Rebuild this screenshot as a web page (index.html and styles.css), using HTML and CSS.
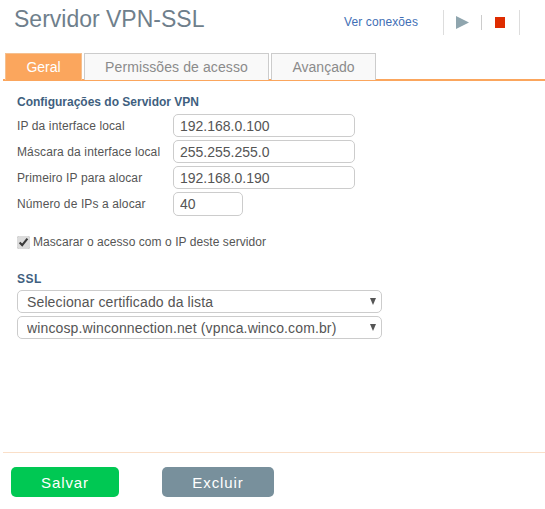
FILE: index.html
```html
<!DOCTYPE html>
<html lang="pt-BR">
<head>
    <meta charset="UTF-8">
    <meta name="viewport" content="width=device-width, initial-scale=1.0">
    <title>Servidor VPN-SSL</title>
    <link rel="stylesheet" href="styles.css">
</head>
<body>
    <div class="page-header">
        <h1>Servidor VPN-SSL</h1>
        <a class="view-link" href="#">Ver conexões</a>
        <div class="toolbar">
            <button class="tool-button play" type="button" aria-label="Iniciar">
                <svg width="13" height="13" viewBox="0 0 13 13"><path d="M0 0L13 6.5L0 13Z" fill="#8fa5ae"/></svg>
            </button>
            <span class="tool-divider"></span>
            <button class="tool-button stop" type="button" aria-label="Parar">
                <svg width="10" height="11" viewBox="0 0 10 11"><rect width="10" height="11" fill="#de2c00"/></svg>
            </button>
        </div>
    </div>

    <div class="tabs">
        <a class="tab active" href="#">Geral</a>
        <a class="tab permissions" href="#">Permissões de acesso</a>
        <a class="tab advanced" href="#">Avançado</a>
    </div>

    <div class="tab-content">
        <h2>Configurações do Servidor VPN</h2>
        <div class="form-row">
            <label>IP da interface local</label>
            <input class="text-input" type="text" value="192.168.0.100">
        </div>
        <div class="form-row">
            <label>Máscara da interface local</label>
            <input class="text-input" type="text" value="255.255.255.0">
        </div>
        <div class="form-row">
            <label>Primeiro IP para alocar</label>
            <input class="text-input" type="text" value="192.168.0.190">
        </div>
        <div class="form-row">
            <label>Número de IPs a alocar</label>
            <input class="text-input short" type="text" value="40">
        </div>

        <label class="check-row">
            <input type="checkbox" checked>
            Mascarar o acesso com o IP deste servidor
        </label>

        <h2 class="ssl-title">SSL</h2>
        <div class="select-wrap">
            <select class="select-input">
                <option>Selecionar certificado da lista</option>
            </select>
        </div>
        <div class="select-wrap">
            <select class="select-input">
                <option>wincosp.winconnection.net (vpnca.winco.com.br)</option>
            </select>
        </div>
    </div>

    <div class="page-footer">
        <button class="btn save" type="button">Salvar</button>
        <button class="btn delete" type="button">Excluir</button>
    </div>
</body>
</html>
```

FILE: styles.css
```css
html, body {
    height: 100%;
}

body {
    margin: 0;
    font-family: "Liberation Sans", Arial, sans-serif;
    font-size: 12px;
    color: #555;
    background-color: #fff;
    overflow: hidden;
}

.page-header {
    display: flex;
    align-items: flex-start;
    height: 53px;
    padding-left: 14px;
    box-sizing: border-box;
}

h1 {
    margin: 4px 0 0;
    font-size: 23px;
    line-height: 30px;
    font-weight: normal;
    color: #6f7f8c;
}

.view-link {
    margin: 15px 0 0 auto;
    font-size: 12px;
    line-height: 15px;
    letter-spacing: 0.1px;
    color: #3f6fb5;
    text-decoration: none;
}

.toolbar {
    display: flex;
    align-items: center;
    height: 25px;
    margin: 10px 25px 0 25px;
    border-left: 1px solid #ddd;
    border-right: 1px solid #ddd;
}

.tool-button {
    display: flex;
    align-items: center;
    justify-content: center;
    padding: 0;
    border: none;
    background: none;
}

.tool-button.play {
    width: 37px;
}

.tool-button.stop {
    width: 37px;
    padding-right: 2px;
    box-sizing: border-box;
}

.tool-divider {
    width: 1px;
    height: 15px;
    background-color: #ccc;
}

.tabs {
    display: flex;
    gap: 2px;
    height: 28px;
    margin-left: 3px;
    padding-left: 2px;
    box-sizing: border-box;
    border-bottom: 2px solid #fba65d;
}

.tab {
    box-sizing: border-box;
    height: 27px;
    line-height: 26px;
    text-align: center;
    font-size: 14px;
    color: #8b8b8b;
    text-decoration: none;
    background-color: #f9f9f9;
    border: 1px solid #ccc;
    border-bottom: none;
}

.tab.active {
    width: 77px;
    color: #fff;
    background-color: #fba65d;
    border-color: #f5c08f;
}

.tab.permissions {
    width: 185px;
    letter-spacing: 0.1px;
}

.tab.advanced {
    width: 105px;
}

.tab-content {
    padding: 14px 0 0 17px;
}

h2 {
    margin: 0 0 5px;
    font-size: 12px;
    line-height: 14px;
    font-weight: bold;
    color: #3f5f80;
}

.form-row {
    display: flex;
    align-items: center;
    height: 23px;
    margin-bottom: 3px;
}

.form-row label {
    width: 156px;
    flex-shrink: 0;
    letter-spacing: 0.12px;
    color: #555;
}

.text-input {
    box-sizing: border-box;
    width: 182px;
    height: 23px;
    padding: 1px 6px 0;
    font-family: inherit;
    font-size: 14px;
    color: #555;
    border: 1px solid #ccc;
    border-radius: 5px;
    outline: none;
}

.text-input.short {
    width: 70px;
    height: 24px;
}

.check-row {
    display: flex;
    align-items: center;
    margin-top: 19px;
    height: 16px;
    letter-spacing: 0.06px;
}

.check-row input {
    width: 13px;
    height: 13px;
    margin: 0 3px 0 0;
    accent-color: #dcdcdc;
}

.ssl-title {
    margin: 22px 0 4px;
    letter-spacing: 0.5px;
}

.select-wrap {
    position: relative;
    width: 365px;
    height: 23px;
    margin-bottom: 3px;
}

.select-wrap::after {
    content: "";
    position: absolute;
    top: 8px;
    right: 6px;
    border-left: 3.5px solid transparent;
    border-right: 3.5px solid transparent;
    border-top: 7px solid #555;
    pointer-events: none;
}

.select-input {
    display: block;
    box-sizing: border-box;
    width: 100%;
    height: 23px;
    padding: 0 9px;
    font-family: inherit;
    font-size: 14px;
    letter-spacing: 0.13px;
    color: #555;
    background-color: #fff;
    border: 1px solid #ccc;
    border-radius: 5px;
    appearance: none;
}

.page-footer {
    position: absolute;
    left: 3px;
    right: 0;
    top: 452px;
    display: flex;
    gap: 43px;
    padding: 14px 0 0 8px;
    border-top: 1px solid #fadfc8;
}

.btn {
    height: 30px;
    padding: 0;
    border: none;
    border-radius: 5px;
    font-family: "Liberation Sans", Arial, sans-serif;
    font-size: 15px;
    letter-spacing: 0.9px;
    color: #fff;
}

.btn.save {
    width: 108px;
    background-color: #00c853;
}

.btn.delete {
    width: 112px;
    background-color: #78909c;
}
```
